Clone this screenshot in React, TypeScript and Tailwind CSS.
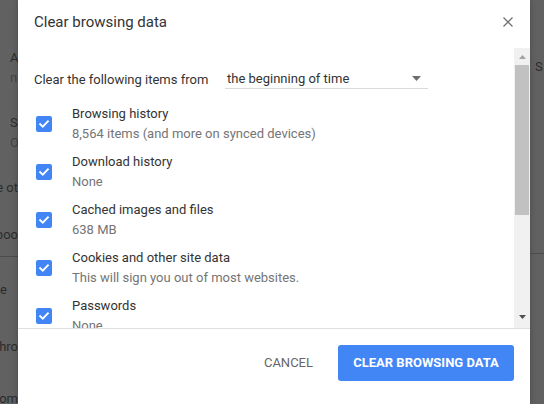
const items = [
  { label: "Browsing history", note: "8,564 items (and more on synced devices)" },
  { label: "Download history", note: "None" },
  { label: "Cached images and files", note: "638 MB" },
  { label: "Cookies and other site data", note: "This will sign you out of most websites." },
  { label: "Passwords", note: "None" },
];

const Check = () => (
  <div className="w-[16px] h-[16px] rounded-[2px] bg-[#4285f4] flex items-center justify-center shrink-0">
    <svg width="12" height="12" viewBox="0 0 12 12" fill="none">
      <path d="M2.2 6.2 L4.8 8.7 L9.9 3.4" stroke="#fff" strokeWidth="1.9" strokeLinecap="square" />
    </svg>
  </div>
);

const App = () => {
  return (
    <div className="w-[544px] h-[404px] overflow-hidden flex bg-[#616161] font-['Roboto',sans-serif] text-[13px]">
      {/* page behind the overlay, left side */}
      <div className="w-[18px] shrink-0 flex flex-col overflow-hidden text-[#2c2c2c] leading-[20px]">
        <div className="h-[48px] shrink-0" />
        <div className="pl-[10px] whitespace-nowrap">A</div>
        <div className="pl-[10px] whitespace-nowrap text-[#444]">n</div>
        <div className="h-[25px] shrink-0" />
        <div className="pl-[10px] whitespace-nowrap">S</div>
        <div className="pl-[10px] whitespace-nowrap text-[#444]">O</div>
        <div className="h-[25px] shrink-0" />
        <div className="flex justify-end whitespace-nowrap">e ot</div>
        <div className="h-[27px] shrink-0" />
        <div className="flex justify-end whitespace-nowrap">boo</div>
        <div className="h-[11px] shrink-0" />
        <div className="h-px shrink-0 bg-[#4b4b4b]" />
        <div className="h-[23px] shrink-0" />
        <div className="whitespace-nowrap">e</div>
        <div className="h-[37px] shrink-0" />
        <div className="flex justify-end whitespace-nowrap">hro</div>
        <div className="h-[32px] shrink-0" />
        <div className="flex justify-end whitespace-nowrap">om</div>
      </div>

      {/* dialog */}
      <div className="w-[512px] shrink-0 bg-white flex flex-col shadow-[0_0_6px_rgba(0,0,0,0.25)]">
        <div className="h-[48px] shrink-0 pb-[4px] pl-[16px] pr-[17px] flex items-center justify-between">
          <h1 className="text-[15px] leading-[20px] text-[#333]">Clear browsing data</h1>
          <svg width="10" height="10" viewBox="0 0 10 10">
            <path d="M0.5 0.5 L9.5 9.5 M9.5 0.5 L0.5 9.5" stroke="#737373" strokeWidth="1.3" />
          </svg>
        </div>

        <div className="relative h-[281px] shrink-0 overflow-hidden border-b border-[#e0e0e0] pl-[16px]">
          <div className="mt-[21px] flex items-center">
            <div className="w-[191px] shrink-0 text-[#333] leading-[19px]">Clear the following items from</div>
            <div className="w-[203px] h-[20px] border-b border-[#dadada] pl-[2px] pr-[7px] flex items-center justify-between text-[#333] leading-[19px]">
              <span>the beginning of time</span>
              <svg width="9" height="5" viewBox="0 0 9 5">
                <path d="M0 0 H9 L4.5 5 Z" fill="#6e6e6e" />
              </svg>
            </div>
          </div>

          <div className="mt-[11px] flex flex-col">
            {items.map((it) => (
              <div key={it.label} className="h-[48px] shrink-0 flex items-center">
                <div className="ml-[2px]">
                  <Check />
                </div>
                <div className="ml-[20px] flex flex-col leading-[20px] whitespace-nowrap">
                  <span className="text-[#333]">{it.label}</span>
                  <span className="text-[#757575]">{it.note}</span>
                </div>
              </div>
            ))}
          </div>

          {/* scrollbar */}
          <div className="absolute right-0 top-0 bottom-0 w-[16px] bg-[#f1f1f1] flex flex-col items-center">
            <svg className="mt-[7px]" width="7" height="4" viewBox="0 0 7 4">
              <path d="M0 4 H7 L3.5 0 Z" fill="#a3a3a3" />
            </svg>
            <div className="mt-[6px] w-[14px] h-[150px] bg-[#c1c1c1]" />
            <div className="flex-1" />
            <svg className="mb-[9px]" width="7" height="4" viewBox="0 0 7 4">
              <path d="M0 0 H7 L3.5 4 Z" fill="#505050" />
            </svg>
          </div>
        </div>

        <div className="pt-[16px] pr-[16px] flex justify-end items-center">
          <button className="h-[36px] px-[16px] mr-[9px] text-[13px] text-[#666]">
            CANCEL
          </button>
          <button className="h-[36px] w-[176px] rounded-[3px] bg-[#4285f4] text-white text-[13px] font-bold">
            CLEAR BROWSING DATA
          </button>
        </div>
      </div>

      {/* page behind the overlay, right side */}
      <div className="flex-1 flex flex-col overflow-hidden text-[#2c2c2c] leading-[20px]">
        <div className="h-[57px] shrink-0" />
        <div className="pl-[5px] whitespace-nowrap">S</div>
        <div className="h-[176px] shrink-0" />
        <div className="h-px shrink-0 bg-[#4b4b4b]" />
      </div>
    </div>
  );
};

export default App;
